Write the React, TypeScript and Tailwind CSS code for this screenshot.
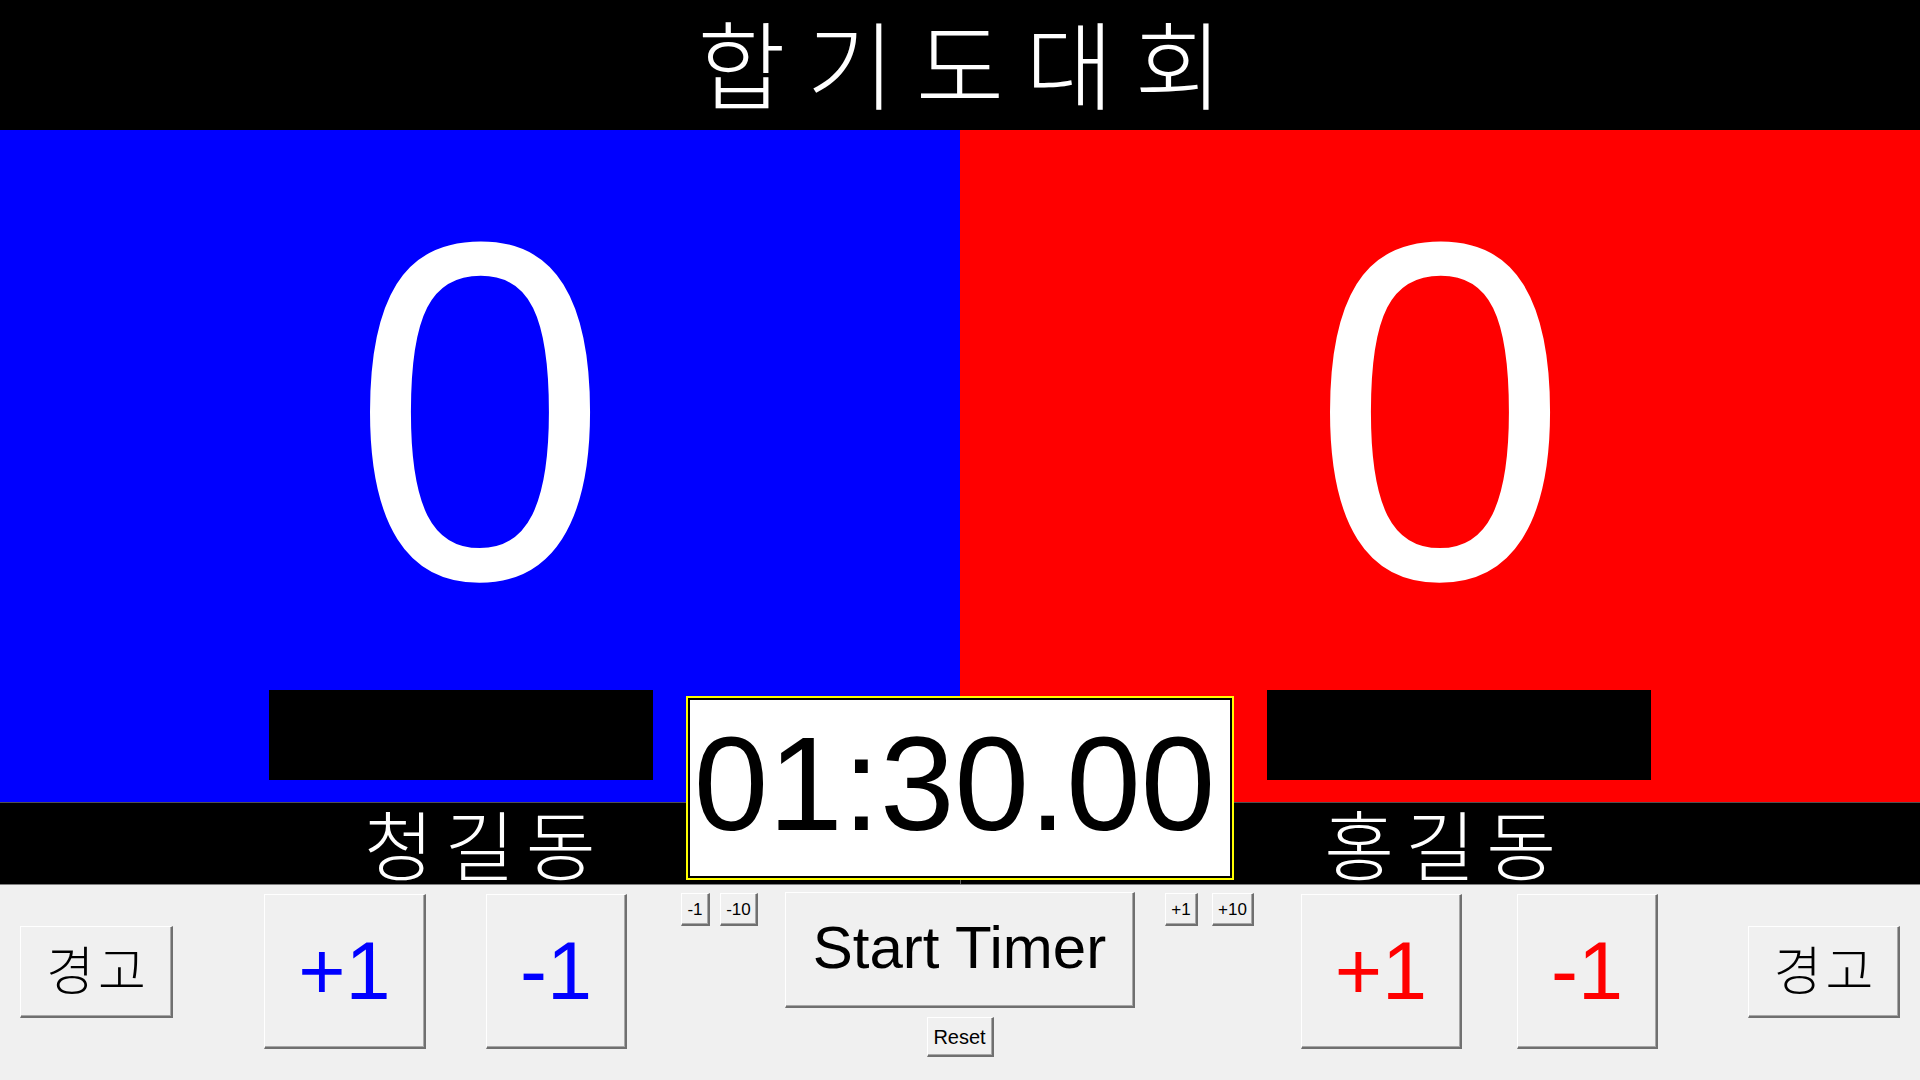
import React, { useState } from 'react';

type Side = {
    name: string;
    bg: string;
    text: string;
    boxShift: string;
};

const blue: Side = { name: "청길동", bg: "bg-[#0000ff]", text: "text-[#0000ff]", boxShift: "mr-[38px]" };
const red: Side = { name: "홍길동", bg: "bg-[#ff0000]", text: "text-[#ff0000]", boxShift: "ml-[38px]" };

// classic windows-looking button
const btn =
    "flex shrink-0 items-center justify-center bg-[#f0f0f0] border-t border-l border-t-white border-l-white border-r-2 border-b-2 border-r-[#707070] border-b-[#707070] shadow-[inset_-1px_-1px_0_#a8a8a8] leading-none";

function ScorePanel({ side, score }: { side: Side; score: number }) {
    return (
        <div className={`flex-1 flex flex-col items-center pt-[40px] ${side.bg}`}>
            <div className="h-[482px] text-[482px] leading-none text-white scale-x-[0.955]">{score}</div>
            <div className={`mt-[38px] w-[384px] h-[90px] bg-black ${side.boxShift}`} />
        </div>
    );
}

export default function App() {
    const [blueScore, setBlueScore] = useState(0);
    const [redScore, setRedScore] = useState(0);
    const [seconds, setSeconds] = useState(90);

    const mm = String(Math.floor(seconds / 60)).padStart(2, '0');
    const ss = String(seconds % 60).padStart(2, '0');

    return (
        <div className="relative w-[1920px] h-[1080px] flex flex-col overflow-hidden bg-[#f0f0f0] font-[Liberation_Sans,Noto_Sans_CJK_KR,sans-serif]">
            {/* title */}
            <header className="h-[130px] shrink-0 bg-black flex items-center justify-center">
                <h1 className="text-[96px] leading-none font-light tracking-[21px] text-white pl-[21px] pt-[8px]">합기도대회</h1>
            </header>

            {/* scores */}
            <div className="h-[672px] shrink-0 flex">
                <ScorePanel side={blue} score={blueScore} />
                <ScorePanel side={red} score={redScore} />
            </div>

            {/* names */}
            <div className="h-[83px] shrink-0 flex bg-black border-t border-b border-t-[#505050] border-b-[#808080]">
                <div className="flex-1 flex items-center justify-center border-r border-[#606060] pt-[11px]">
                    <span className="text-[76px] leading-none font-light tracking-[11px] pl-[11px] text-white">{blue.name}</span>
                </div>
                <div className="flex-1 flex items-center justify-center pt-[11px]">
                    <span className="text-[76px] leading-none font-light tracking-[11px] pl-[11px] text-white">{red.name}</span>
                </div>
            </div>

            {/* controls */}
            <div className="flex-1 flex items-start pl-[20px] text-black">
                <button className={`${btn} mt-[41px] w-[153px] h-[92px] text-[52px] font-light tracking-[4px] pl-[4px]`}>경고</button>
                <button
                    onClick={() => setBlueScore(s => s + 1)}
                    className={`${btn} mt-[9px] ml-[91px] w-[162px] h-[155px] text-[81px] ${blue.text}`}
                >
                    +1
                </button>
                <button
                    onClick={() => setBlueScore(s => Math.max(0, s - 1))}
                    className={`${btn} mt-[9px] ml-[60px] w-[141px] h-[155px] text-[81px] ${blue.text}`}
                >
                    -1
                </button>

                <button onClick={() => setSeconds(s => Math.max(0, s - 1))} className={`${btn} mt-[8px] ml-[54px] w-[29px] h-[33px] text-[17px]`}>-1</button>
                <button onClick={() => setSeconds(s => Math.max(0, s - 10))} className={`${btn} mt-[8px] ml-[10px] w-[38px] h-[33px] text-[17px]`}>-10</button>

                <div className="mt-[7px] ml-[27px] w-[350px] flex flex-col items-center shrink-0">
                    <button className={`${btn} w-[350px] h-[116px] text-[60px] pb-[4px]`}>Start Timer</button>
                    <button onClick={() => setSeconds(90)} className={`${btn} mt-[9px] w-[67px] h-[40px] text-[20px]`}>Reset</button>
                </div>

                <button onClick={() => setSeconds(s => s + 1)} className={`${btn} mt-[8px] ml-[30px] w-[33px] h-[33px] text-[17px]`}>+1</button>
                <button onClick={() => setSeconds(s => s + 10)} className={`${btn} mt-[8px] ml-[14px] w-[42px] h-[33px] text-[17px]`}>+10</button>

                <button
                    onClick={() => setRedScore(s => s + 1)}
                    className={`${btn} mt-[9px] ml-[47px] w-[161px] h-[155px] text-[81px] ${red.text}`}
                >
                    +1
                </button>
                <button
                    onClick={() => setRedScore(s => Math.max(0, s - 1))}
                    className={`${btn} mt-[9px] ml-[55px] w-[141px] h-[155px] text-[81px] ${red.text}`}
                >
                    -1
                </button>
                <button className={`${btn} mt-[41px] ml-[90px] w-[152px] h-[92px] text-[52px] font-light tracking-[4px] pl-[4px]`}>경고</button>
            </div>

            {/* timer overlay */}
            <div className="absolute left-[686px] top-[696px] w-[548px] h-[184px] border-2 border-[#ffff00] bg-white shadow-[inset_0_0_0_2px_#000] flex items-center justify-center pr-[11px] pb-[8px]">
                <span className="text-[134px] leading-none text-black">{mm}:{ss}.00</span>
            </div>
        </div>
    );
}
